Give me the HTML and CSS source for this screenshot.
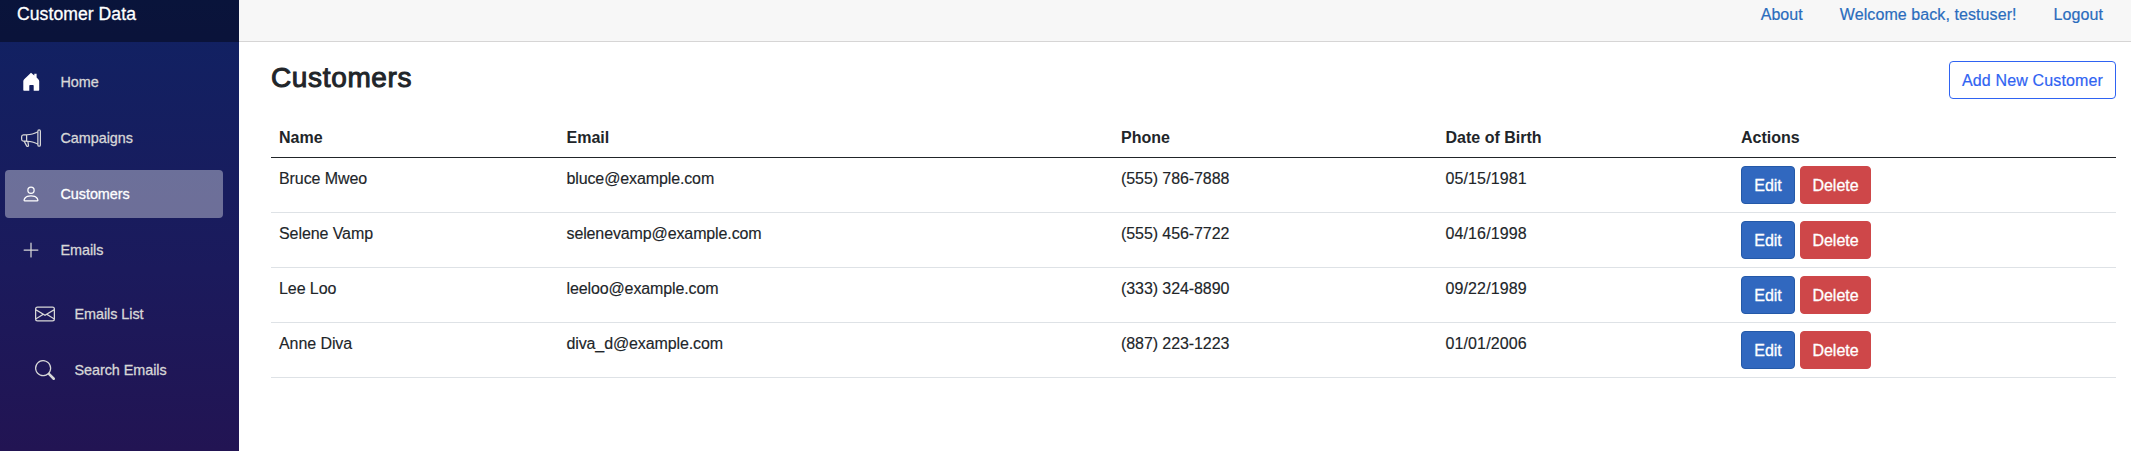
FILE: index.html
```html
<!DOCTYPE html>
<html lang="en">
<head>
<meta charset="utf-8">
<title>Customer Data</title>
<link rel="stylesheet" href="styles.css">
</head>
<body>
<div class="page">
  <aside class="sidebar">
    <div class="brand">Customer Data</div>
    <nav class="menu">
      <a class="item"><svg class="icon" viewBox="0 0 20 20"><path fill="#fff" d="M10 .8 13.3 3.5V1.8h2.3v3.6l1.7 1.9q.9 1 .9 2V18a.7.7 0 0 1-.7.7h-4.800V13.700a.7.7 0 0 0-.7-.7H9a.7.7 0 0 0-.7.7v5H3a.7.7 0 0 1-.7-.7V9.300q0-1.200.9-2z"/></svg><span>Home</span></a>
      <a class="item"><svg class="icon" viewBox="0 0 16 16"><path fill="currentColor" d="M13 2.5a1.5 1.5 0 0 1 3 0v11a1.5 1.5 0 0 1-3 0v-.214c-2.162-1.241-4.49-1.843-6.912-2.083l.405 2.712A1 1 0 0 1 5.51 15.1h-.548a1 1 0 0 1-.916-.599l-1.85-3.49-.202-.003A2.014 2.014 0 0 1 0 9V7a2.02 2.02 0 0 1 1.992-2.013 75 75 0 0 0 2.483-.075c3.043-.154 6.148-.849 8.525-2.199zm1 0v11a.5.5 0 0 0 1 0v-11a.5.5 0 0 0-1 0m-1 1.35c-2.344 1.205-5.209 1.842-8 2.033v4.233q.27.015.537.036c2.568.189 5.093.744 7.463 1.993zm-9 6.215v-4.13a95 95 0 0 1-1.992.052A1.02 1.02 0 0 0 1 7v2c0 .55.448 1.002 1.006 1.009A61 61 0 0 1 4 10.065m-.657.975 1.609 3.037.01.024h.548l-.002-.014-.443-2.966a68 68 0 0 0-1.722-.082z"/></svg><span>Campaigns</span></a>
      <a class="item active"><svg class="icon" viewBox="0 0 16 16"><path fill="currentColor" d="M8 8a3 3 0 1 0 0-6 3 3 0 0 0 0 6m2-3a2 2 0 1 1-4 0 2 2 0 0 1 4 0m4 8c0 1-1 1-1 1H3s-1 0-1-1 1-4 6-4 6 3 6 4m-1-.004c-.001-.246-.154-.986-.832-1.664C11.516 10.68 10.289 10 8 10s-3.516.68-4.168 1.332c-.678.678-.83 1.418-.832 1.664z"/></svg><span>Customers</span></a>
      <a class="item"><svg class="icon" viewBox="0 0 16 16"><path fill="currentColor" d="M8 2a.5.5 0 0 1 .5.5v5h5a.5.5 0 0 1 0 1h-5v5a.5.5 0 0 1-1 0v-5h-5a.5.5 0 0 1 0-1h5v-5A.5.5 0 0 1 8 2"/></svg><span>Emails</span></a>
      <div class="submenu">
        <a class="item"><svg class="icon" viewBox="0 0 16 16"><path fill="currentColor" d="M0 4a2 2 0 0 1 2-2h12a2 2 0 0 1 2 2v8a2 2 0 0 1-2 2H2a2 2 0 0 1-2-2zm2-1a1 1 0 0 0-1 1v.217l7 4.2 7-4.2V4a1 1 0 0 0-1-1zm13 2.383-4.708 2.825L15 11.105zm-.034 6.876-5.64-3.471L8 9.583l-1.326-.795-5.64 3.47A1 1 0 0 0 2 13h12a1 1 0 0 0 .966-.741M1 11.105l4.708-2.897L1 5.383z"/></svg><span>Emails List</span></a>
        <a class="item"><svg class="icon" viewBox="0 0 16 16"><path fill="currentColor" d="M11.742 10.344a6.5 6.5 0 1 0-1.397 1.398h-.001q.044.06.098.115l3.85 3.85a1 1 0 0 0 1.415-1.414l-3.85-3.85a1 1 0 0 0-.115-.1zM12 6.5a5.5 5.5 0 1 1-11 0 5.5 5.5 0 0 1 11 0"/></svg><span>Search Emails</span></a>
      </div>
    </nav>
  </aside>
  <main class="main">
    <header class="topbar"><a>About</a><a>Welcome back, testuser!</a><a>Logout</a></header>
    <section class="content">
      <div class="heading">
        <h3>Customers</h3>
        <button class="btn outline">Add New Customer</button>
      </div>
      <table class="table">
        <colgroup><col class="c-name"><col class="c-email"><col class="c-phone"><col class="c-dob"><col></colgroup>
        <thead><tr><th>Name</th><th>Email</th><th>Phone</th><th>Date of Birth</th><th>Actions</th></tr></thead>
        <tbody>
          <tr><td>Bruce Mweo</td><td class="email">bluce@example.com</td><td>(555) 786-7888</td><td class="date">05/15/1981</td><td class="cell-actions"><div class="actions"><button class="btn edit">Edit</button><button class="btn delete">Delete</button></div></td></tr>
          <tr><td>Selene Vamp</td><td class="email">selenevamp@example.com</td><td>(555) 456-7722</td><td class="date">04/16/1998</td><td class="cell-actions"><div class="actions"><button class="btn edit">Edit</button><button class="btn delete">Delete</button></div></td></tr>
          <tr><td>Lee Loo</td><td class="email">leeloo@example.com</td><td>(333) 324-8890</td><td class="date">09/22/1989</td><td class="cell-actions"><div class="actions"><button class="btn edit">Edit</button><button class="btn delete">Delete</button></div></td></tr>
          <tr><td>Anne Diva</td><td class="email">diva_d@example.com</td><td>(887) 223-1223</td><td class="date">01/01/2006</td><td class="cell-actions"><div class="actions"><button class="btn edit">Edit</button><button class="btn delete">Delete</button></div></td></tr>
        </tbody>
      </table>
    </section>
  </main>
</div>
</body>
</html>
```
FILE: styles.css
```css
* { box-sizing: border-box; }
body { margin: 0; font: 16px/24px "Helvetica Neue", "Liberation Sans", Arial, sans-serif; color: #212529; background: #fff; }
.page { display: flex; height: 451px; overflow: hidden; }
.sidebar { width: 239px; flex: none; background: linear-gradient(180deg, #102263 0, #1b1a5c 60%, #221453 100%); }
.brand { height: 42px; padding: 2px 17px 0; background: rgba(0, 0, 0, .4); color: #fff; font-size: 17.6px; line-height: 24px; letter-spacing: .05px; -webkit-text-stroke: .3px; }
.menu { padding: 16px 16px 0 5px; }
.item { display: flex; align-items: center; height: 48px; margin-bottom: 8px; padding-left: 15.5px; gap: 20px; border-radius: 4px; font-size: 14.4px; letter-spacing: -.05px; color: #d7d7d7; -webkit-text-stroke: .3px; }
.item.active { background: rgba(255, 255, 255, .37); color: #fff; }
.icon { flex: none; width: 20px; height: 20px; }
.submenu { padding: 8px 0 0 14px; }
.main { flex: 1; }
.topbar { display: flex; justify-content: flex-end; gap: 37px; height: 42px; padding: 3px 28px 0; background: #f7f7f7; border-bottom: 1px solid #d6d5d5; color: #2a6cbd; letter-spacing: .08px; -webkit-text-stroke: .2px; }
.content { padding: 19px 15px 0 32px; }
.heading { display: flex; justify-content: space-between; height: 56px; }
h3 { margin: 0; font-size: 28px; line-height: 33px; font-weight: 400; letter-spacing: .65px; -webkit-text-stroke: 1px; }
.btn { height: 38px; padding: 1px 0 0; border: 1px solid; border-radius: 4px; font: inherit; color: #fff; -webkit-text-stroke: .3px; }
.outline { width: 167px; background: #fff; border-color: #2f63f2; color: #2f63f2; letter-spacing: .14px; -webkit-text-stroke: .2px; }
.edit { width: 54px; background: #3168bf; border-color: #2459a8; }
.delete { width: 71px; background: #ce4749; border-color: #ce4749; }
.table { width: 100%; table-layout: fixed; border-collapse: separate; border-spacing: 0; }
.c-name { width: 287.5px; }
.c-email { width: 554.5px; }
.c-phone { width: 324.5px; }
.c-dob { width: 295.5px; }
th, td { padding: 9px 8px 7px; text-align: left; vertical-align: top; border-bottom: 1px solid #dee2e6; }
th { font-weight: 700; border-color: #212529; }
td { letter-spacing: -.08px; -webkit-text-stroke: .15px; }
.email { letter-spacing: -.12px; }
.date { letter-spacing: .12px; }
.cell-actions { padding: 8px; letter-spacing: 0; }
.actions { display: flex; gap: 5px; }
```
